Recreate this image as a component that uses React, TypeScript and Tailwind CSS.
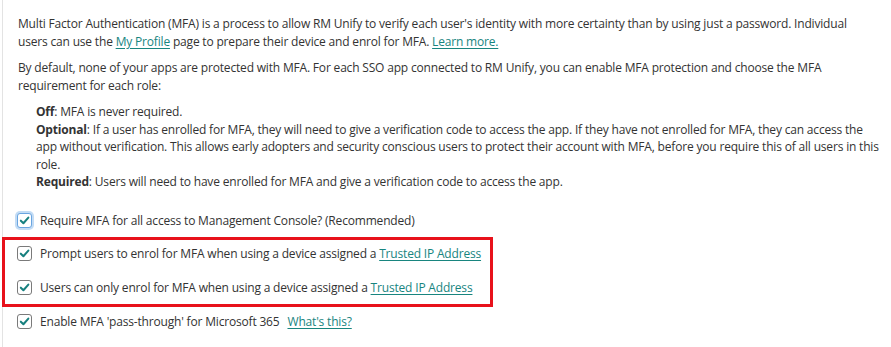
import React from "react";

function Check({ focus }: { focus?: boolean }) {
  return (
    <span
      className={`inline-flex items-center justify-center w-[15px] h-[15px] rounded-[3px] border bg-white shrink-0 ${
        focus ? "shadow-[0_0_0_2px_#c3dcf5] border-[#6aa5e0]" : "border-[#7a7a7a]"
      }`}
    >
      <svg width="11" height="11" viewBox="0 0 12 12">
        <path d="M2 6.2 L4.8 9 L10.2 2.8" fill="none" stroke="#17807f" strokeWidth="2.2" strokeLinecap="round" strokeLinejoin="round" />
      </svg>
    </span>
  );
}

const link = "text-[#18857f] underline underline-offset-2";

export default function App() {
  return (
    <div className="w-[891px] h-[347px] bg-white overflow-hidden">
      <div className="ml-[2px] h-full border-l border-[#e3e3e3] pl-[15px] pt-[15px] text-[12px] tracking-[-0.18px] leading-[18px] text-[#333] font-['Open_Sans',sans-serif] whitespace-nowrap">
        <p>
          Multi Factor Authentication (MFA) is a process to allow RM Unify to verify each user's identity with more certainty than by using just a password. Individual
          <br />
          users can use the <span className={link}>My Profile</span> page to prepare their device and enrol for MFA.{" "}
          <span className={link}>Learn more.</span>
        </p>
        <p className="mt-[8px]">
          By default, none of your apps are protected with MFA. For each SSO app connected to RM Unify, you can enable MFA protection and choose the MFA
          <br />
          requirement for each role:
        </p>
        <div className="mt-[8px] pl-[18px] leading-[17.5px]">
          <div>
            <b className="font-bold">Off</b>: MFA is never required.
          </div>
          <div>
            <b className="font-bold">Optional</b>: If a user has enrolled for MFA, they will need to give a verification code to access the app. If they have not enrolled for MFA, they can access the
            <br />
            app without verification. This allows early adopters and security conscious users to protect their account with MFA, before you require this of all users in this
            <br />
            role.
          </div>
          <div>
            <b className="font-bold">Required</b>: Users will need to have enrolled for MFA and give a verification code to access the app.
          </div>
        </div>
        <div className="-ml-[1px] mt-[21px] flex items-center gap-[8px] h-[18px]">
          <Check focus />
          <span>Require MFA for all access to Management Console? (Recommended)</span>
        </div>
        <div className="-ml-[16px] mt-[7px] w-[491px] border-[3px] border-[#e8111b] pl-[12px] pt-[5px] pb-[7px] flex flex-col gap-[16px]">
          <div className="flex items-center gap-[8px] h-[18px]">
            <Check />
            <span>
              Prompt users to enrol for MFA when using a device assigned a <span className={link}>Trusted IP Address</span>
            </span>
          </div>
          <div className="flex items-center gap-[8px] h-[18px]">
            <Check />
            <span>
              Users can only enrol for MFA when using a device assigned a <span className={link}>Trusted IP Address</span>
            </span>
          </div>
        </div>
        <div className="-ml-[1px] mt-[6px] flex items-center gap-[8px] h-[18px]">
          <Check />
          <span className="flex items-center gap-[8px]">
            <span>Enable MFA 'pass-through' for Microsoft 365</span>
            <span className={link}>What's this?</span>
          </span>
        </div>
      </div>
    </div>
  );
}
